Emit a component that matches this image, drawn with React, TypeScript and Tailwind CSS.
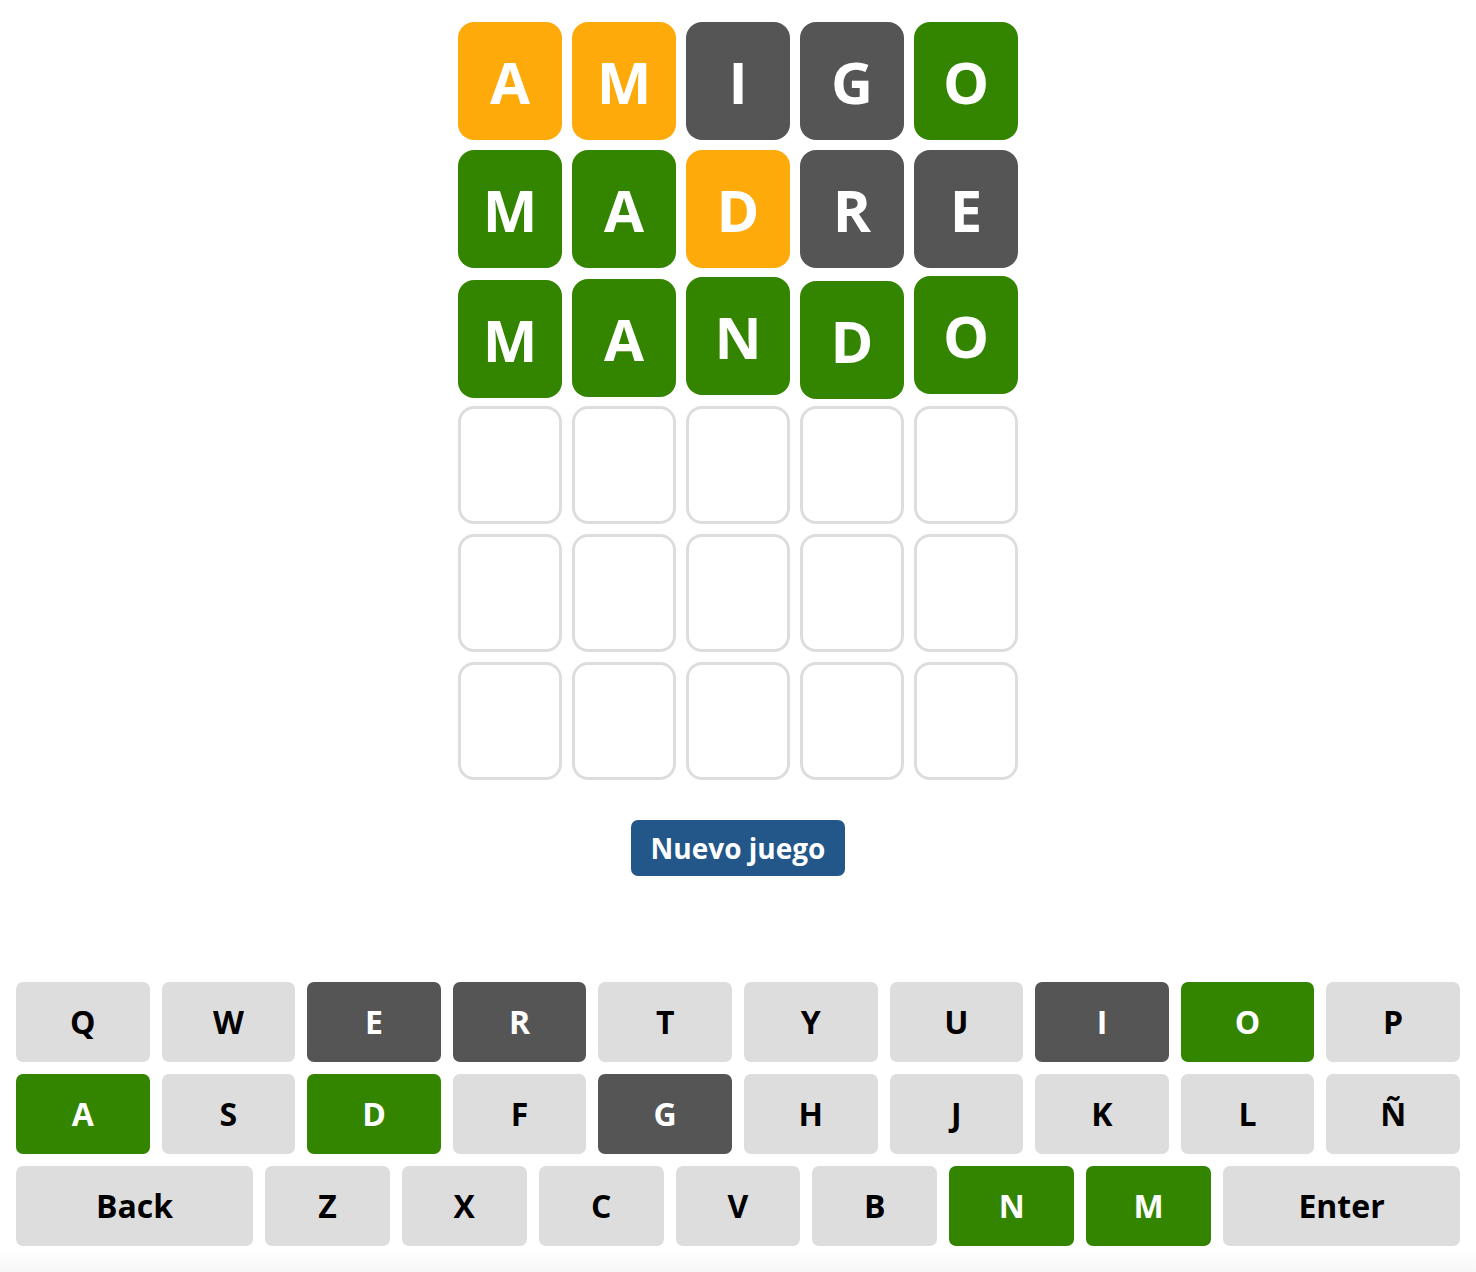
const font = { fontFamily: '"Open Sans", "Noto Sans", sans-serif' };

type State = "correct" | "present" | "absent" | "empty";

const board: { letter: string; state: State }[][] = [
  [
    { letter: "A", state: "present" },
    { letter: "M", state: "present" },
    { letter: "I", state: "absent" },
    { letter: "G", state: "absent" },
    { letter: "O", state: "correct" },
  ],
  [
    { letter: "M", state: "correct" },
    { letter: "A", state: "correct" },
    { letter: "D", state: "present" },
    { letter: "R", state: "absent" },
    { letter: "E", state: "absent" },
  ],
  [
    { letter: "M", state: "correct" },
    { letter: "A", state: "correct" },
    { letter: "N", state: "correct" },
    { letter: "D", state: "correct" },
    { letter: "O", state: "correct" },
  ],
];

const bounce = ["translate-y-[2px]", "translate-y-[1px]", "-translate-y-[1px]", "translate-y-[3px]", "-translate-y-[2px]"];

const tileColor: Record<State, string> = {
  correct: "bg-[#338500] text-white",
  present: "bg-[#ffaa0b] text-white",
  absent: "bg-[#555555] text-white",
  empty: "border-[3px] border-[#dddddd] bg-white",
};

const keyColor: Record<string, string> = {
  E: "absent", R: "absent", I: "absent", G: "absent",
  O: "correct", A: "correct", D: "correct", N: "correct", M: "correct",
};

const keyClass = (k: string) => {
  const s = keyColor[k];
  if (s === "correct") return "bg-[#338500] text-white";
  if (s === "absent") return "bg-[#555555] text-white";
  return "bg-[#dddddd] text-black";
};

function Tile({ letter, state, extra }: { letter?: string; state: State; extra?: string }) {
  return (
    <div
      className={`flex h-[118px] w-[104px] items-center justify-center rounded-[16px] text-[58px] font-bold ${tileColor[state]} ${extra ?? ""}`}
    >
      {letter}
    </div>
  );
}

function Key({ k, wide }: { k: string; wide?: boolean }) {
  return (
    <button
      className={`flex h-[80px] items-center justify-center rounded-[7px] text-[32px] font-bold ${
        wide ? "w-[237px] shrink-0" : "flex-1"
      } ${keyClass(k)}`}
    >
      {k}
    </button>
  );
}

export default function App() {
  const rows = [
    ["Q", "W", "E", "R", "T", "Y", "U", "I", "O", "P"],
    ["A", "S", "D", "F", "G", "H", "J", "K", "L", "Ñ"],
  ];
  const bottom = ["Z", "X", "C", "V", "B", "N", "M"];

  return (
    <div className="flex min-h-[1272px] flex-col bg-white" style={font}>
      <div className="flex flex-col items-center pt-[22px]">
        <div className="flex flex-col gap-[10px]">
          {Array.from({ length: 6 }).map((_, r) => (
            <div key={r} className="flex gap-[10px]">
              {Array.from({ length: 5 }).map((_, c) => {
                const t = board[r]?.[c];
                return t ? (
                  <Tile key={c} letter={t.letter} state={t.state} extra={r === 2 ? bounce[c] : ""} />
                ) : (
                  <Tile key={c} state="empty" />
                );
              })}
            </div>
          ))}
        </div>

        <button className="mt-[40px] flex h-[56px] w-[214px] items-center justify-center rounded-[7px] bg-[#23578a] text-[28px] font-bold text-white">
          Nuevo juego
        </button>
      </div>

      <div className="mt-[106px] flex flex-col gap-[12px] px-[16px]">
        {rows.map((row, i) => (
          <div key={i} className="flex gap-[12px]">
            {row.map((k) => (
              <Key key={k} k={k} />
            ))}
          </div>
        ))}
        <div className="flex gap-[12px]">
          <Key k="Back" wide />
          {bottom.map((k) => (
            <Key key={k} k={k} />
          ))}
          <Key k="Enter" wide />
        </div>
      </div>

      <div className="mt-[4px] h-[22px] bg-gradient-to-b from-white to-[#f7f7f7]" />
    </div>
  );
}
